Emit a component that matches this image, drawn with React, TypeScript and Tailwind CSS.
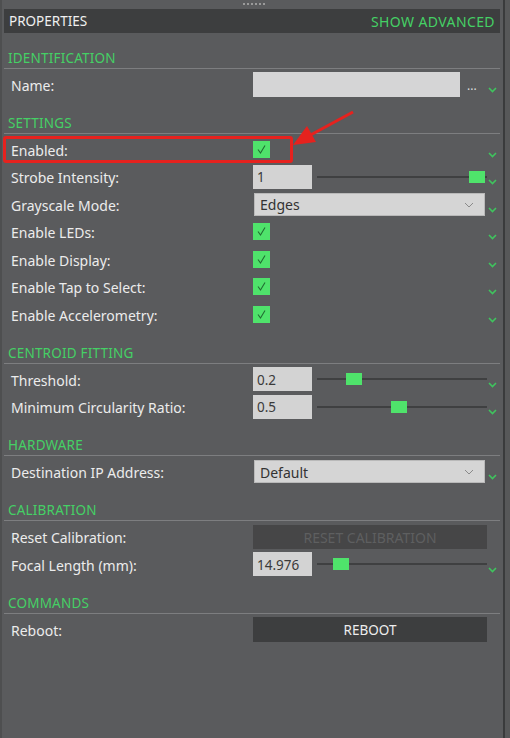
import React from "react";

function Chevron() {
  return (
    <svg width="9" height="6" viewBox="0 0 9 6" className="mt-[11px]">
      <polyline points="1,1 4.5,4.5 8,1" fill="none" stroke="#3fc45e" strokeWidth="1.6" />
    </svg>
  );
}

function Check() {
  return (
    <div className="flex h-[17px] w-[17px] items-center justify-center bg-[#4fe36b]">
      <svg width="11" height="11" viewBox="0 0 11 11">
        <polyline points="2,5.5 4.5,9 9,1.5" fill="none" stroke="#216d32" strokeWidth="1.1" />
      </svg>
    </div>
  );
}

function Row({ label, children, chevron = true }: { label: string; children?: React.ReactNode; chevron?: boolean }) {
  return (
    <div className="flex h-[27.5px] items-center">
      <div className="w-[249px] pl-[7px] pt-[2px] text-[14px] text-[#ececec]">{label}</div>
      <div className="flex w-[234px] items-center">{children}</div>
      <div className="flex w-[10px] justify-end">{chevron && <Chevron />}</div>
    </div>
  );
}

function Section({ title, children }: { title: string; children: React.ReactNode }) {
  return (
    <div>
      <div className="mr-[3px] flex h-[35.5px] items-end border-b border-[#7d7e80] pl-[4px] text-[13.5px] leading-[18px] text-[#45d065]">
        <span className="-translate-y-[1px] tracking-[0.2px]">{title}</span>
      </div>
      <div className="pt-[2px]">{children}</div>
    </div>
  );
}

function Slider({ value, pos }: { value: string; pos: number }) {
  return (
    <>
      <div className="flex h-[24px] w-[59px] items-center bg-[#d3d3d3] pl-[4px] pt-[1px] text-[13.5px] text-[#3a3a3a]">{value}</div>
      <div className="relative ml-[5px] flex h-[12px] flex-1 items-center">
        <div className="h-[2px] w-full bg-[#3f4041]" />
        <div className="absolute top-0 h-[12px] w-[16px] bg-[#4fe36b]" style={{ left: `${pos * 152}px` }} />
      </div>
    </>
  );
}

function Dropdown({ value }: { value: string }) {
  return (
    <div className="ml-[1px] flex h-[23px] w-[231px] items-center justify-between border border-[#b9b9b9] bg-[#d5d5d5] pl-[5px] pr-[10px] pt-[1px] text-[14px] text-[#333]">
      <span>{value}</span>
      <svg width="10" height="6" viewBox="0 0 10 6">
        <polyline points="1,1 5,5 9,1" fill="none" stroke="#8a8a8a" strokeWidth="1" />
      </svg>
    </div>
  );
}

export default function App() {
  return (
    <div
      className="relative h-[738px] w-[510px] overflow-hidden bg-[#5a5b5d]"
      style={{ fontFamily: '"Noto Sans", "Open Sans", sans-serif' }}
    >
      <div className="flex h-full">
        <div className="w-[2px] bg-[#4e4f50]" />
        <div className="w-[501px] pl-[2px]">
          {/* grip */}
          <div className="flex h-[9px] items-start justify-center pt-[3px]">
            <div className="flex gap-[2px]">
              {[0, 1, 2, 3, 4, 5].map((i) => (
                <div key={i} className="h-[2px] w-[2px] bg-[#9a9a9a]" />
              ))}
            </div>
          </div>
          <div className="flex h-[24px] w-[496px] items-center justify-between bg-[#3d3e3f] px-[5px] text-[13.5px]">
            <span className="text-[#f0f0f0]">PROPERTIES</span>
            <span className="text-[14px] tracking-[0.4px] text-[#45d065]">SHOW ADVANCED</span>
          </div>

          <Section title="IDENTIFICATION">
            <Row label="Name:">
              <div className="h-[25px] w-[207px] bg-[#d5d5d6]" />
              <div className="flex-1 pl-[7px] pt-[3px] text-[12px] leading-none text-[#dddddd]">...</div>
            </Row>
          </Section>

          <Section title="SETTINGS">
            <Row label="Enabled:">
              <Check />
            </Row>
            <Row label="Strobe Intensity:">
              <Slider value="1" pos={1} />
            </Row>
            <Row label="Grayscale Mode:">
              <Dropdown value="Edges" />
            </Row>
            <Row label="Enable LEDs:">
              <Check />
            </Row>
            <Row label="Enable Display:">
              <Check />
            </Row>
            <Row label="Enable Tap to Select:">
              <Check />
            </Row>
            <Row label="Enable Accelerometry:">
              <Check />
            </Row>
          </Section>

          <Section title="CENTROID FITTING">
            <Row label="Threshold:">
              <Slider value="0.2" pos={0.19} />
            </Row>
            <Row label="Minimum Circularity Ratio:">
              <Slider value="0.5" pos={0.49} />
            </Row>
          </Section>

          <Section title="HARDWARE">
            <Row label="Destination IP Address:">
              <Dropdown value="Default" />
            </Row>
          </Section>

          <Section title="CALIBRATION">
            <Row label="Reset Calibration:" chevron={false}>
              <div className="flex h-[24px] w-[234px] items-center justify-center bg-[#464647] pt-[1px] text-[14px] text-[#5e5f60]">
                RESET CALIBRATION
              </div>
            </Row>
            <Row label="Focal Length (mm):">
              <Slider value="14.976" pos={0.105} />
            </Row>
          </Section>

          <Section title="COMMANDS">
            <Row label="Reboot:" chevron={false}>
              <div className="flex h-[25px] w-[234px] items-center justify-center bg-[#3d3e3f] pt-[1px] text-[13.5px] text-[#ededed]">
                REBOOT
              </div>
            </Row>
          </Section>
        </div>
        <div className="w-[2px] bg-[#3a3b3c]" />
        <div className="flex-1 bg-[#575859]" />
      </div>

      {/* annotation */}
      <div className="absolute left-[3px] top-[136px] h-[27px] w-[290px] rounded-[3px] border-[3px] border-[#e6221e]" />
      <svg className="absolute left-0 top-0" width="510" height="738" viewBox="0 0 510 738">
        <line x1="353" y1="112" x2="305" y2="138" stroke="#e6221e" strokeWidth="3" />
        <polygon points="293,145 307,126 316,142" fill="#e6221e" />
      </svg>
    </div>
  );
}
